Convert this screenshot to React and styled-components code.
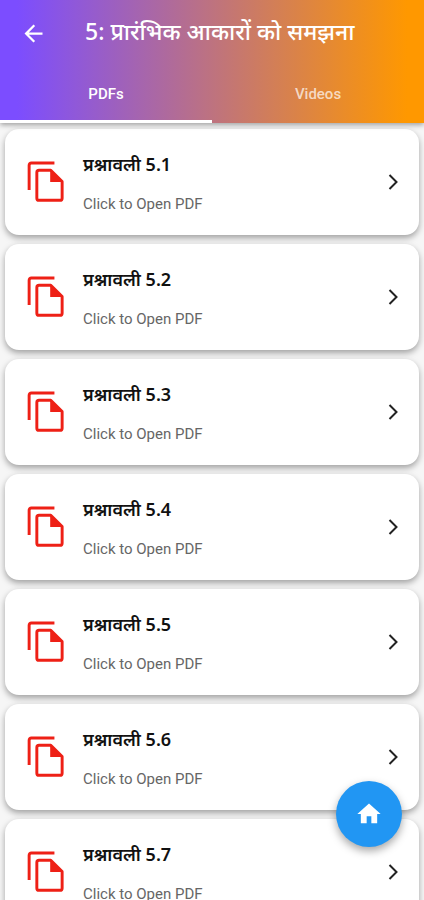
import React, { useState } from 'react';
import styled, { createGlobalStyle } from 'styled-components';

const GlobalStyle = createGlobalStyle`
  * {
    box-sizing: border-box;
  }

  body {
    margin: 0;
    background: #f6f6f6;
    font-family: Roboto, 'Noto Sans', 'Noto Sans Devanagari', sans-serif;
  }
`;

const Header = styled.header`
  position: sticky;
  top: 0;
  z-index: 1;
  background: linear-gradient(to right, #7c4dff 4%, #ff9800 96%);
  box-shadow: 0 2px 5px rgba(0, 0, 0, 0.35);
`;

const TitleBar = styled.div`
  display: flex;
  align-items: center;
  height: 66px;
  padding: 0 20px;
  gap: 38px;
`;

const BackButton = styled.button`
  display: flex;
  padding: 0;
  border: none;
  background: none;
  color: #fff;
  cursor: pointer;
`;

const Title = styled.h1`
  margin: 0;
  padding-bottom: 4px;
  font-family: 'Noto Sans', 'Noto Sans Devanagari', sans-serif;
  font-size: 23px;
  font-weight: 500;
  line-height: 32px;
  white-space: nowrap;
  color: #fff;
`;

const Tabs = styled.div`
  display: flex;
`;

const Tab = styled.button`
  flex: 1;
  height: 57px;
  padding: 2px 0 0;
  border: none;
  border-bottom: 3px solid ${({ $active }) => ($active ? '#fff' : 'transparent')};
  background: none;
  background-clip: padding-box;
  font-family: inherit;
  font-size: 15px;
  font-weight: 500;
  color: ${({ $active }) => ($active ? '#fff' : 'rgba(255, 255, 255, 0.7)')};
  cursor: pointer;
`;

const List = styled.main`
  display: flex;
  flex-direction: column;
  gap: 9px;
  padding: 6px 5px;
`;

const Card = styled.button`
  display: flex;
  align-items: center;
  width: 100%;
  height: 106px;
  padding: 0 15px 0 19px;
  border: none;
  border-radius: 14px;
  background: #fff;
  box-shadow: 0 3px 6px rgba(0, 0, 0, 0.35);
  font-family: inherit;
  text-align: left;
  cursor: pointer;
`;

const CardText = styled.span`
  display: flex;
  flex: 1;
  flex-direction: column;
  gap: 18px;
  margin-left: 15px;
  padding-top: 2px;
`;

const CardTitle = styled.span`
  font-family: 'Noto Sans', 'Noto Sans Devanagari', sans-serif;
  font-size: 18px;
  font-weight: 600;
  line-height: 24px;
  color: #111;
`;

const CardHint = styled.span`
  font-size: 15px;
  line-height: 20px;
  color: #666;
`;

const HomeButton = styled.button`
  position: fixed;
  right: 22px;
  bottom: 53px;
  z-index: 2;
  display: flex;
  align-items: center;
  justify-content: center;
  width: 66px;
  height: 66px;
  padding: 0;
  border: none;
  border-radius: 50%;
  background: #2196f3;
  color: #fff;
  box-shadow: 0 4px 8px rgba(0, 0, 0, 0.35);
  cursor: pointer;
`;

const BackIcon = () => (
  <svg width="27" height="27" viewBox="0 0 24 24" fill="currentColor" aria-hidden="true">
    <path d="M20 11H7.83l5.59-5.59L12 4l-8 8 8 8 1.41-1.41L7.83 13H20v-2z" />
  </svg>
);

const CopyIcon = () => (
  <svg width="44" height="44" viewBox="0 0 24 24" fill="none" stroke="#ee2016" strokeWidth="1.6" aria-hidden="true">
    <path d="M16.6 1.6H4A1.2 1.2 0 0 0 2.8 2.8v13.6" />
    <path d="M14.6 5.6H8.2A1.2 1.2 0 0 0 7 6.8v14A1.2 1.2 0 0 0 8.2 22h11.4a1.2 1.2 0 0 0 1.2-1.2v-9z" strokeLinejoin="round" />
    <path d="M14.3 5.4v6.6h6.6z" fill="#ee2016" stroke="none" />
  </svg>
);

const ChevronIcon = () => (
  <svg width="20" height="20" viewBox="0 0 20 20" fill="none" stroke="#222" strokeWidth="2" aria-hidden="true">
    <path d="M5.5 3l7 7-7 7" />
  </svg>
);

const HomeIcon = () => (
  <svg width="28" height="28" viewBox="0 0 24 24" fill="currentColor" aria-hidden="true">
    <path d="M10 20v-6h4v6h5v-8h3L12 3 2 12h3v8z" />
  </svg>
);

const exercises = ['5.1', '5.2', '5.3', '5.4', '5.5', '5.6', '5.7'];
const tabs = ['PDFs', 'Videos'];

const App = () => {
  const [active, setActive] = useState('PDFs');

  return (
    <>
      <GlobalStyle />
      <Header>
        <TitleBar>
          <BackButton aria-label="Back">
            <BackIcon />
          </BackButton>
          <Title>5: प्रारंभिक आकारों को समझना</Title>
        </TitleBar>
        <Tabs role="tablist">
          {tabs.map((tab) => (
            <Tab
              key={tab}
              role="tab"
              aria-selected={active === tab}
              $active={active === tab}
              onClick={() => setActive(tab)}
            >
              {tab}
            </Tab>
          ))}
        </Tabs>
      </Header>

      <List>
        {exercises.map((number) => (
          <Card key={number}>
            <CopyIcon />
            <CardText>
              <CardTitle>प्रश्नावली {number}</CardTitle>
              <CardHint>Click to Open PDF</CardHint>
            </CardText>
            <ChevronIcon />
          </Card>
        ))}
      </List>

      <HomeButton aria-label="Home">
        <HomeIcon />
      </HomeButton>
    </>
  );
};

export default App;
